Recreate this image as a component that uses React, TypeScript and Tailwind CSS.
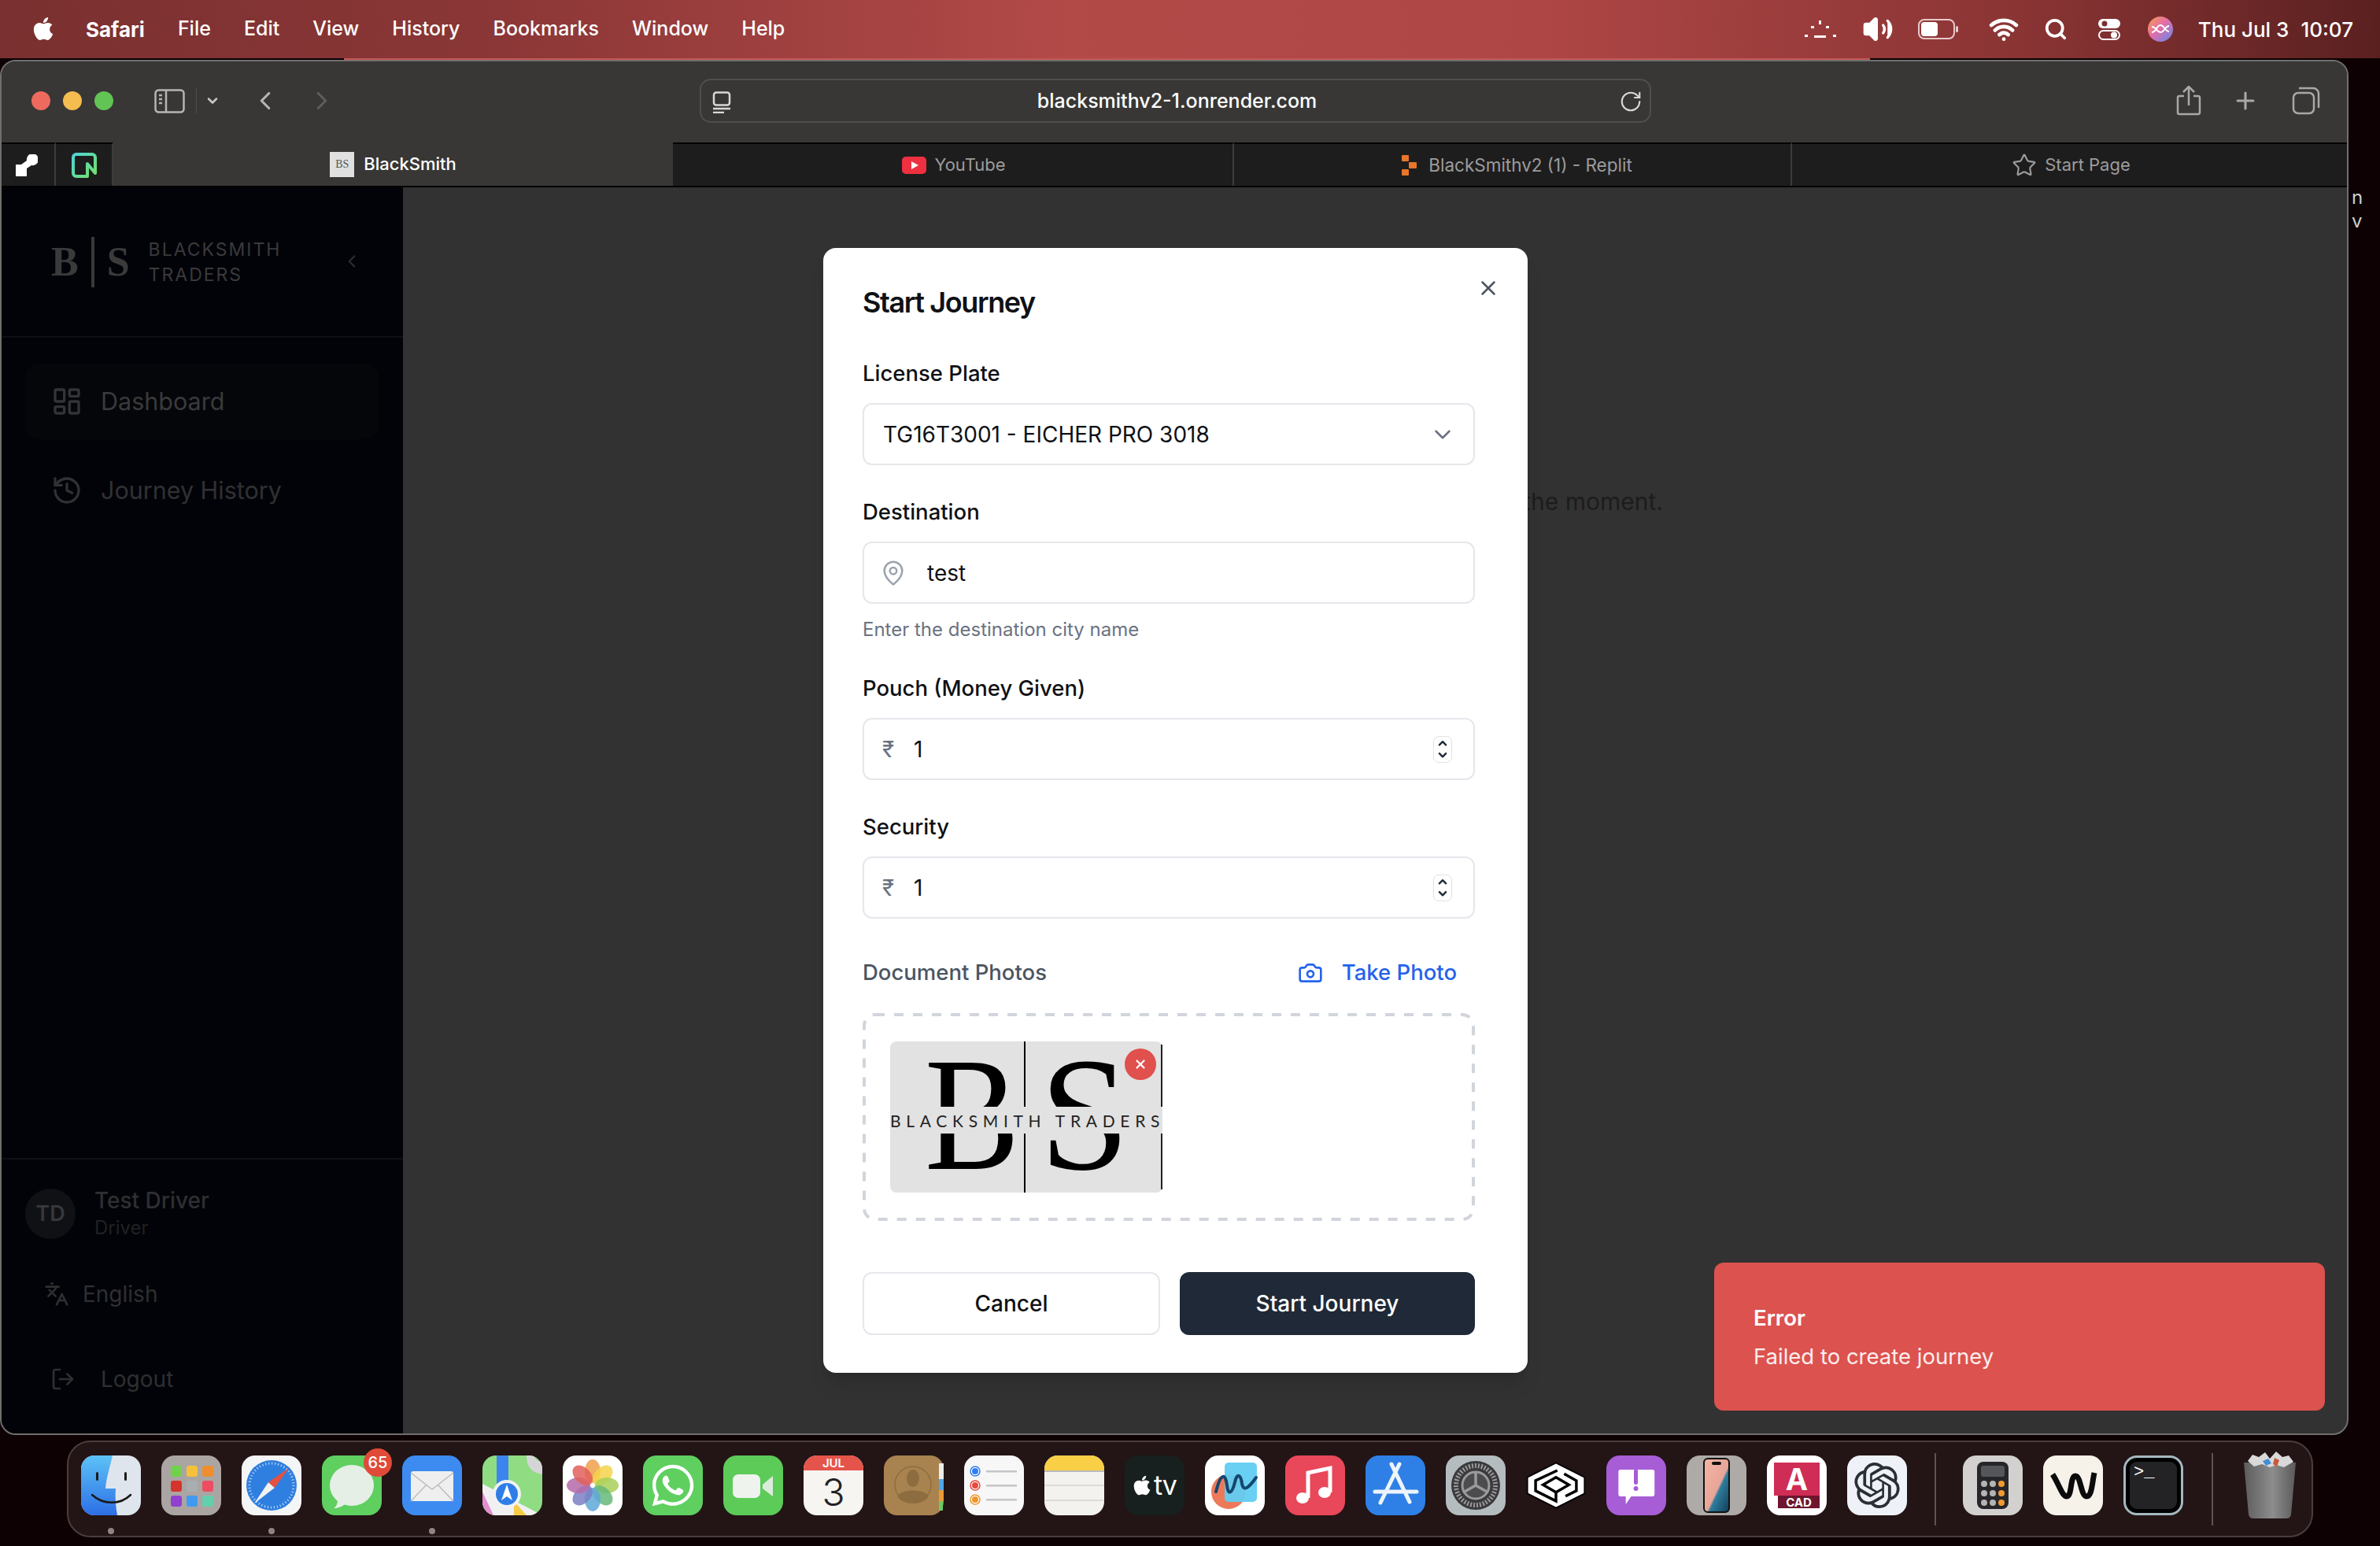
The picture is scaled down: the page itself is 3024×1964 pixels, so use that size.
import type { ReactNode } from 'react'
import {
  Camera,
  ChevronDown,
  ChevronLeft,
  ChevronRight,
  ChevronUp,
  History,
  Languages,
  LayoutDashboard,
  LogOut,
  MapPin,
  Plus,
  RotateCw,
  Search,
  Star,
  Volume2,
  Wifi,
  X,
} from 'lucide-react'
import { FaApple, FaWhatsapp } from 'react-icons/fa'
import { SiOpenai } from 'react-icons/si'

const menuItems = ['File', 'Edit', 'View', 'History', 'Bookmarks', 'Window', 'Help']

function MenuBar() {
  return (
    <div className="flex h-[74px] shrink-0 items-center justify-between bg-[linear-gradient(90deg,#7a3030_0%,#8a3636_20%,#b24a48_45%,#ad4645_65%,#8a3434_85%,#5a2020_100%)] pl-[41px] pr-[34px] text-[25px] text-white">
      <div className="flex items-center">
        <FaApple className="mr-[40px] h-[33px] w-[28px] -translate-y-[1px]" />
        <span className="mr-[42px] text-[26px] font-bold">Safari</span>
        <div className="flex gap-[42px] font-medium">
          {menuItems.map((item) => (
            <span key={item}>{item}</span>
          ))}
        </div>
      </div>
      <div className="flex items-center">
        <svg className="mr-[32px] h-[26px] w-[40px]" viewBox="0 0 40 26" fill="white">
          <rect x="18" y="2" width="3" height="5" />
          <rect x="8" y="9" width="4" height="3" />
          <rect x="27" y="9" width="4" height="3" />
          <rect x="0" y="20" width="4" height="3" />
          <rect x="12" y="21" width="15" height="3" />
          <rect x="36" y="20" width="4" height="3" />
        </svg>
        <Volume2 className="mr-[30px] h-[40px] w-[42px]" fill="white" strokeWidth={2} />
        <svg className="mr-[38px] h-[26px] w-[52px]" viewBox="0 0 52 26">
          <rect x="1" y="1" width="45" height="24" rx="7" fill="none" stroke="#e9c9c9" strokeWidth="2" />
          <rect x="4" y="4" width="21" height="18" rx="4" fill="white" />
          <rect x="48" y="9" width="3" height="8" rx="1.5" fill="#e9c9c9" />
        </svg>
        <Wifi className="mr-[32px] h-[38px] w-[38px]" strokeWidth={3} />
        <Search className="mr-[38px] h-[30px] w-[30px]" strokeWidth={3} />
        <svg className="mr-[34px] h-[30px] w-[30px]" viewBox="0 0 30 30">
          <rect x="1" y="2" width="28" height="12" rx="6" fill="white" />
          <circle cx="9" cy="8" r="3.5" fill="#7a3030" />
          <rect x="2" y="17" width="26" height="11" rx="5.5" fill="none" stroke="white" strokeWidth="2" />
          <circle cx="21" cy="22.5" r="4" fill="white" />
        </svg>
        <svg className="mr-[32px] h-[32px] w-[32px]" viewBox="0 0 32 32">
          <defs>
            <linearGradient id="siri" x1="0" y1="0" x2="1" y2="1">
              <stop offset="0" stopColor="#f4a24a" />
              <stop offset="0.45" stopColor="#e86ca8" />
              <stop offset="1" stopColor="#5a8cf0" />
            </linearGradient>
          </defs>
          <circle cx="16" cy="16" r="16" fill="url(#siri)" />
          <path d="M5 13c6 0 6 7 11 7s6-8 11-8M5 20c6 0 6-9 11-9s6 8 11 8" fill="none" stroke="white" strokeWidth="2" />
        </svg>
        <span className="text-[26px] font-medium">Thu Jul 3</span>
        <span className="ml-[15px] text-[26px] font-medium">10:07</span>
      </div>
    </div>
  )
}

function Toolbar() {
  return (
    <div className="relative flex h-[103px] shrink-0 items-center bg-[#383735] pb-[3px] pl-[38px] pr-[34px]">
      <div className="flex gap-[16px]">
        <span className="h-[24px] w-[24px] rounded-full bg-[#ef6a5e]" />
        <span className="h-[24px] w-[24px] rounded-full bg-[#f5bd4f]" />
        <span className="h-[24px] w-[24px] rounded-full bg-[#61c454]" />
      </div>
      <svg className="ml-[52px] h-[31px] w-[39px]" viewBox="0 0 39 31" fill="none" stroke="#b5b5b3" strokeWidth="2.5">
        <rect x="1.5" y="1.5" width="36" height="28" rx="4" />
        <path d="M15 2v27M6 8h4M6 13h4M6 18h4" />
      </svg>
      <span className="ml-[14px] h-[32px] w-px bg-[#4d4c4a]" />
      <ChevronDown className="ml-[10px] h-[20px] w-[20px] text-[#c8c8c6]" strokeWidth={3} />
      <ChevronLeft className="ml-[38px] h-[38px] w-[38px] text-[#b5b5b3]" strokeWidth={2} />
      <ChevronRight className="ml-[34px] h-[38px] w-[38px] text-[#5f5e5c]" strokeWidth={2} />
      <div className="absolute left-[887px] top-[22px] flex h-[56px] w-[1209px] items-center justify-center rounded-[14px] border-2 border-[#4f4e4c] text-[25px] font-medium text-white">
        <svg className="absolute left-[14px] top-[14px] h-[28px] w-[24px]" viewBox="0 0 24 28" fill="none" stroke="#d8d8d6" strokeWidth="2.5">
          <rect x="2" y="1.5" width="20" height="16" rx="3" />
          <path d="M1 22h22M1 27h14" />
        </svg>
        <span className="translate-x-[2px] translate-y-[1px]">blacksmithv2-1.onrender.com</span>
        <RotateCw className="absolute right-[9px] top-[12px] h-[30px] w-[30px] text-[#d8d8d6]" strokeWidth={1.7} />
      </div>
      <div className="ml-auto flex items-center gap-[39px] text-[#a8a8a6]">
        <svg className="h-[38px] w-[32px]" viewBox="0 0 32 38" fill="none" stroke="currentColor" strokeWidth="2.5">
          <path d="M10 13H4a2 2 0 0 0-2 2v19a2 2 0 0 0 2 2h24a2 2 0 0 0 2-2V15a2 2 0 0 0-2-2h-6M16 25V2M9 8l7-7 7 7" />
        </svg>
        <Plus className="mr-[3px] h-[34px] w-[34px]" strokeWidth={2.2} />
        <svg className="h-[36px] w-[36px]" viewBox="0 0 36 36" fill="none" stroke="currentColor" strokeWidth="2.5">
          <rect x="2" y="8" width="26" height="26" rx="6" />
          <path d="M9 2h18a7 7 0 0 1 7 7v18" />
        </svg>
      </div>
    </div>
  )
}

function TabBar() {
  return (
    <div className="flex h-[57px] shrink-0 border-b-2 border-black bg-[#1e1d1e] text-[22px]">
      <div className="flex w-[69px] items-center justify-center border-t-2 border-r-2 border-t-black border-r-[#3d3c3b] pr-[3px]">
        <svg className="h-[28px] w-[28px]" viewBox="0 0 28 28" fill="white">
          <path d="M0 13h7l7-5a7.5 7.5 0 1 1 6 6l-6 4v10H0z" />
        </svg>
      </div>
      <div className="flex w-[73px] items-center justify-center border-t-2 border-r-2 border-t-black border-r-[#3d3c3b]">
        <svg className="h-[32px] w-[32px]" viewBox="0 0 32 32" fill="none" strokeWidth="4" strokeLinejoin="round">
          <defs>
            <linearGradient id="pinnedN" x1="0" y1="0" x2="1" y2="1">
              <stop offset="0" stopColor="#4fd4d8" />
              <stop offset="1" stopColor="#72e268" />
            </linearGradient>
          </defs>
          <path d="M20 30H6a4 4 0 0 1-4-4V6a4 4 0 0 1 4-4h20a4 4 0 0 1 4 4v20l-10-12z" stroke="url(#pinnedN)" />
        </svg>
      </div>
      <div className="flex w-[711px] items-center justify-center gap-[12px] bg-[#383735] font-medium text-white">
        <span className="flex h-[32px] w-[31px] items-center justify-center bg-[#e0e0e0] font-['Liberation_Serif',serif] text-[14px] text-[#555]">BS</span>
        <span>BlackSmith</span>
      </div>
      <div className="flex w-[713px] items-center justify-center gap-[10px] border-t-2 border-r-2 border-t-black border-r-[#3d3c3b] pl-[3px] text-[#9c9c9c]">
        <svg className="h-[22px] w-[31px]" viewBox="0 0 31 22">
          <rect width="31" height="22" rx="5" fill="#ee3040" />
          <path d="M12 6l9 5-9 5z" fill="white" />
        </svg>
        <span>YouTube</span>
      </div>
      <div className="flex w-[709px] items-center justify-center gap-[14px] border-t-2 border-r-2 border-t-black border-r-[#3d3c3b] pl-[12px] text-[22.5px] text-[#9c9c9c]">
        <svg className="h-[26px] w-[20px]" viewBox="0 0 20 26" fill="#e8762b">
          <rect x="0" y="0" width="9" height="8" rx="1" />
          <rect x="9" y="9" width="10" height="8" rx="1" />
          <rect x="0" y="18" width="9" height="8" rx="1" />
        </svg>
        <span>BlackSmithv2 (1) - Replit</span>
      </div>
      <div className="flex flex-1 items-center justify-center gap-[10px] border-t-2 border-t-black pl-[4px] text-[#9c9c9c]">
        <Star className="h-[32px] w-[32px]" strokeWidth={1.6} />
        <span>Start Page</span>
      </div>
    </div>
  )
}

function Sidebar() {
  return (
    <aside className="flex w-[510px] shrink-0 flex-col bg-[#020308] text-[#3a3a3b]">
      <div className="relative flex h-[191px] shrink-0 items-center border-b-2 border-[#0e1015] pl-[63px]">
        <span className="font-['Liberation_Serif',serif] text-[52px] font-bold leading-none">B</span>
        <span className="ml-[16px] mr-[16px] h-[64px] w-[4px] bg-[#3a3a3b]" />
        <span className="font-['Liberation_Serif',serif] text-[52px] font-bold leading-none">S</span>
        <span className="ml-[24px] text-[23px] leading-[32px] tracking-[2px]">
          BLACKSMITH
          <br />
          TRADERS
        </span>
        <ChevronLeft className="absolute left-[432px] top-[81px] h-[26px] w-[26px] text-[#2d2e30]" strokeWidth={2} />
      </div>
      <nav className="flex flex-col gap-[17px] pl-[30px] pr-[31px] pt-[33px] text-[30.5px]">
        <div className="flex h-[96px] items-center gap-[23px] rounded-[16px] bg-[#05060a] pl-[33px]">
          <LayoutDashboard className="h-[40px] w-[40px] text-[#333436]" strokeWidth={2} />
          <span>Dashboard</span>
        </div>
        <div className="flex h-[96px] items-center gap-[23px] pl-[33px] text-[#303133]">
          <History className="h-[40px] w-[40px]" strokeWidth={2} />
          <span>Journey History</span>
        </div>
      </nav>
      <div className="mt-auto h-[350px] border-t-2 border-[#0e1015] text-[28px] text-[#2e2f31]">
        <div className="flex items-center gap-[24px] pl-[30px] pt-[34px]">
          <span className="flex h-[64px] w-[64px] items-center justify-center rounded-full bg-[#101114] text-[27px] font-semibold text-[#37383a]">TD</span>
          <div className="flex flex-col">
            <span className="font-medium leading-[36px]">Test Driver</span>
            <span className="text-[24px] leading-[34px] text-[#202124]">Driver</span>
          </div>
        </div>
        <div className="mt-[46px] flex items-center gap-[17px] pl-[54px]">
          <Languages className="h-[32px] w-[32px]" strokeWidth={2} />
          <span>English</span>
        </div>
        <div className="mt-[66px] flex items-center gap-[32px] pl-[62px]">
          <LogOut className="h-[32px] w-[32px]" strokeWidth={2} />
          <span>Logout</span>
        </div>
      </div>
    </aside>
  )
}

function Field({ label, gap = 'mt-[39px]', children }: { label: string; gap?: string; children: ReactNode }) {
  return (
    <div className={gap}>
      <div className="mb-[18px] text-[27.5px] font-medium leading-[40px] text-[#0f1115]">{label}</div>
      {children}
    </div>
  )
}

function AmountInput({ value }: { value: string }) {
  return (
    <div className="flex h-[79px] items-center rounded-[12px] border-2 border-[#e5e7eb] pl-[23px] pr-[27px] text-[28px] text-[#0f1115]">
      <span className="w-[40px] text-[28px] text-[#6b7280]">₹</span>
      <span>{value}</span>
      <span className="ml-auto flex h-[34px] w-[24px] flex-col items-center justify-center rounded-[7px] border border-[#dfe1e5] text-[#1f2937]">
        <ChevronUp className="-mb-[1px] h-[18px] w-[18px]" strokeWidth={3.5} />
        <ChevronDown className="h-[18px] w-[18px]" strokeWidth={3.5} />
      </span>
    </div>
  )
}

function LogoThumb() {
  return (
    <div className="relative h-[192px] w-[346px] rounded-[8px] bg-[#e2e2e2]">
      <span className="absolute left-[44px] top-0 origin-left scale-x-[0.88] font-['Liberation_Serif',serif] text-[205px] leading-[186px] text-black">B</span>
      <span className="absolute left-[190px] top-0 font-['Liberation_Serif',serif] text-[205px] leading-[186px] text-black">S</span>
      <span className="absolute left-[170px] top-0 h-full w-[2px] bg-black" />
      <span className="absolute bottom-[4px] right-0 top-[4px] w-[2px] bg-[#222]" />
      <div className="absolute left-0 top-[83px] flex h-[34px] w-full items-center whitespace-nowrap bg-[#e2e2e2] font-['Lato',sans-serif] text-[21px] leading-none tracking-[6.7px] text-[#222]">
        BLACKSMITH&nbsp;TRADERS
      </div>
      <span className="absolute left-[298px] top-[9px] flex h-[40px] w-[40px] items-center justify-center rounded-full bg-[#e0504c] text-white">
        <X className="h-[18px] w-[18px]" strokeWidth={3} />
      </span>
    </div>
  )
}

function StartJourneyModal() {
  return (
    <div className="relative h-[1429px] w-[895px] rounded-[16px] bg-white pl-[50px] pr-[67px] pt-[47px] shadow-xl">
      <h2 className="text-[36px] font-semibold leading-[44px] tracking-[-1.4px] text-[#0f1115]">Start Journey</h2>
      <X className="absolute right-[35px] top-[36px] h-[30px] w-[30px] text-[#4b5563]" strokeWidth={2} />

      <Field label="License Plate" gap="mt-[48px]">
        <div className="flex h-[79px] items-center justify-between rounded-[12px] border-2 border-[#e5e7eb] pl-[24px] pr-[22px] text-[28px] text-[#0f1115]">
          <span>TG16T3001 - EICHER PRO 3018</span>
          <ChevronDown className="h-[34px] w-[34px] text-[#6b7280]" strokeWidth={1.8} />
        </div>
      </Field>

      <Field label="Destination">
        <div className="flex h-[79px] items-center rounded-[12px] border-2 border-[#e5e7eb] pl-[20px] text-[28px] text-[#0f1115]">
          <MapPin className="mr-[26px] h-[34px] w-[34px] text-[#9ca3af]" strokeWidth={1.8} />
          <span>test</span>
        </div>
      </Field>
      <p className="mt-[17px] text-[24px] leading-[32px] text-[#6b7280]">Enter the destination city name</p>

      <Field label="Pouch (Money Given)" gap="mt-[38px]">
        <AmountInput value="1" />
      </Field>
      <Field label="Security">
        <AmountInput value="1" />
      </Field>

      <div className="mt-[49px] flex h-[40px] items-center text-[27.5px] font-medium">
        <span className="text-[#4b5563]">Document Photos</span>
        <Camera className="ml-auto mr-[24px] h-[32px] w-[32px] text-[#2563eb]" strokeWidth={2} />
        <span className="mr-[23px] text-[#2563eb]">Take Photo</span>
      </div>
      <div className="relative mt-[31px] h-[264px] pl-[35px] pt-[36px]">
        <svg className="absolute inset-0 h-full w-full" viewBox="0 0 778 264" fill="none">
          <rect x="2" y="2" width="774" height="260" rx="14" stroke="#d1d5db" strokeWidth="4" strokeDasharray="12 12" />
        </svg>
        <LogoThumb />
      </div>

      <div className="mt-[65px] flex gap-[25px] text-[28px] font-medium">
        <div className="flex h-[80px] w-[378px] items-center justify-center rounded-[12px] border-2 border-[#e5e7eb] text-[#0f1115]">Cancel</div>
        <div className="flex h-[80px] flex-1 items-center justify-center rounded-[12px] bg-[#1f2937] text-white">Start Journey</div>
      </div>
    </div>
  )
}

function BrowserWindow() {
  return (
    <div className="flex h-[1747px] w-[2984px] shrink-0 flex-col overflow-hidden rounded-[20px] border-2 border-[#6f6f6e] bg-[#323232]">
      <Toolbar />
      <TabBar />
      <div className="relative flex min-h-0 flex-1">
        <Sidebar />
        <main className="flex flex-1 justify-end pr-[869px] pt-[377px]">
          <span className="text-[30px] leading-[44px] text-[#1c1c1c]">at the moment.</span>
        </main>
        <div className="absolute inset-0 flex justify-center pl-[3px] pt-[77px]">
          <StartJourneyModal />
        </div>
        <div className="absolute bottom-[29px] right-[28px] flex h-[188px] w-[776px] flex-col justify-center gap-[13px] rounded-[12px] bg-[#dc524e] pl-[50px] text-[27.5px] text-white">
          <span className="font-semibold leading-[36px]">Error</span>
          <span className="leading-[36px] text-white/90">Failed to create journey</span>
        </div>
      </div>
    </div>
  )
}

function Squircle({ bg, children, size = 76 }: { bg: string; children?: ReactNode; size?: number }) {
  return (
    <svg width={size} height={size} viewBox="0 0 76 76">
      <rect width="76" height="76" rx="17" fill={bg} />
      {children}
    </svg>
  )
}

function Finder() {
  return (
    <Squircle bg="#dfe5ec">
      <defs>
        <linearGradient id="finder" x1="0" y1="0" x2="0" y2="1">
          <stop offset="0" stopColor="#5cc2f7" />
          <stop offset="1" stopColor="#2d6fe6" />
        </linearGradient>
      </defs>
      <path d="M17 0h23c-3 14-8 28-9 42h13c-1 11 0 23 2 34H17A17 17 0 0 1 0 59V17A17 17 0 0 1 17 0z" fill="url(#finder)" />
      <rect x="19" y="21" width="3" height="11" rx="1.5" fill="#1a1a1a" />
      <rect x="55" y="21" width="3" height="11" rx="1.5" fill="#1a1a1a" />
      <path d="M14 50c14 13 36 13 49 0" fill="none" stroke="#1a1a1a" strokeWidth="2.5" strokeLinecap="round" />
    </Squircle>
  )
}

function Launchpad() {
  const colors = ['#6fd24a', '#f6c13a', '#ee8e2f', '#d5342a', '#a9aeb0', '#ec4d62', '#9140cf', '#3f9af0', '#62d0ac']
  return (
    <Squircle bg="#aaa5a3">
      {colors.map((color, i) => (
        <rect key={color} x={12 + (i % 3) * 20} y={13 + Math.floor(i / 3) * 19} width="14" height="14" rx="3" fill={color} />
      ))}
    </Squircle>
  )
}

function SafariIcon() {
  return (
    <Squircle bg="#f4f5f6">
      <circle cx="38" cy="38" r="32" fill="#2f7fe0" />
      <circle cx="38" cy="38" r="28" fill="none" stroke="#cfe2f8" strokeWidth="3" strokeDasharray="1 3" />
      <path d="M16 61l18-27 8 7z" fill="#f2f2f2" />
      <path d="M60 16L34 34l8 7z" fill="#e8503f" />
    </Squircle>
  )
}

function Messages() {
  return (
    <Squircle bg="#5fcf60">
      <ellipse cx="38" cy="38" rx="28" ry="26" fill="#e6efe6" />
      <path d="M20 56c0 6-2 9-5 11 5 0 11-2 15-6z" fill="#e6efe6" />
    </Squircle>
  )
}

function Mail() {
  return (
    <Squircle bg="#3d8bf0">
      <rect x="11" y="20" width="54" height="38" rx="3" fill="#efefef" />
      <path d="M11 22l27 21 27-21M11 58l20-21M65 58L45 37" fill="none" stroke="#bdbdbd" strokeWidth="1.5" />
    </Squircle>
  )
}

function Maps() {
  return (
    <svg width={76} height={76} viewBox="0 0 76 76">
      <defs>
        <clipPath id="mapsClip">
          <rect width="76" height="76" rx="17" />
        </clipPath>
      </defs>
      <g clipPath="url(#mapsClip)">
        <rect width="76" height="76" fill="#8fdc82" />
        <path d="M0 36l76 40H0z" fill="#f0f0f2" />
        <path d="M0 46v30h14z" fill="#e28fd0" />
        <path d="M40 76V58l16 18z" fill="#f6cc45" />
        <rect x="18" y="0" width="15" height="50" fill="#3d85ee" />
        <path d="M56 0c0 16 8 22 20 24V8C70 8 66 4 66 0z" fill="#d5d5d8" />
        <circle cx="31" cy="49" r="18" fill="#f2f2f4" />
        <circle cx="31" cy="49" r="14" fill="#2f7ee8" />
        <path d="M31 37l7 20-7-5-7 5z" fill="white" />
      </g>
    </svg>
  )
}

function Photos() {
  const petals = ['#f0a04b', '#f4d34a', '#a8cf58', '#66b879', '#5fa8d8', '#7a7fc4', '#b56aa8', '#e2605a']
  return (
    <Squircle bg="white">
      {petals.map((color, i) => (
        <ellipse key={color} cx="38" cy="20" rx="10" ry="15" fill={color} opacity="0.85" transform={`rotate(${i * 45} 38 38)`} />
      ))}
    </Squircle>
  )
}

function Whatsapp() {
  return (
    <div className="flex h-[76px] w-[76px] items-center justify-center rounded-[17px] bg-[#5fcf60] text-white">
      <FaWhatsapp className="h-[60px] w-[60px]" />
    </div>
  )
}

function Facetime() {
  return (
    <Squircle bg="#5ccb58">
      <rect x="12" y="24" width="35" height="30" rx="7" fill="#eef3ee" />
      <path d="M50 37l13-11v26L50 42z" fill="#dcebdc" />
    </Squircle>
  )
}

function CalendarIcon() {
  return (
    <div className="flex h-[76px] w-[76px] flex-col items-center overflow-hidden rounded-[17px] bg-[#f6f5f2]">
      <span className="flex h-[19px] w-full items-center justify-center bg-[#e5544b] text-[15px] font-semibold leading-none text-white">JUL</span>
      <span className="text-[48px] font-light leading-[56px] text-[#222]">3</span>
    </div>
  )
}

function Contacts() {
  return (
    <Squircle bg="#a88350">
      <rect x="70" y="10" width="6" height="20" fill="#ececec" />
      <rect x="70" y="30" width="6" height="14" fill="#4fa6e8" />
      <rect x="70" y="44" width="6" height="14" fill="#ea9a35" />
      <rect x="70" y="58" width="5" height="12" fill="#6ccb63" />
      <circle cx="37" cy="37" r="23" fill="none" stroke="#8d6d40" strokeWidth="1.5" />
      <ellipse cx="37" cy="29" rx="8" ry="11" fill="#8d6d40" />
      <path d="M17 52c4-10 36-10 40 0-8 12-32 12-40 0z" fill="#8d6d40" />
    </Squircle>
  )
}

function Reminders() {
  return (
    <Squircle bg="#f7f7f7">
      {[
        ['#2f7df0', 20],
        ['#e84a3f', 38],
        ['#ee9428', 56],
      ].map(([color, y]) => (
        <g key={color}>
          <circle cx="14" cy={y} r="6" fill="white" stroke={color as string} strokeWidth="1.5" />
          <circle cx="14" cy={y} r="4" fill={color as string} />
          <rect x="28" y={(y as number) - 1} width="39" height="2.5" fill="#c5c5c8" />
        </g>
      ))}
    </Squircle>
  )
}

function Notes() {
  return (
    <svg width={76} height={76} viewBox="0 0 76 76">
      <defs>
        <clipPath id="notesClip">
          <rect width="76" height="76" rx="17" />
        </clipPath>
      </defs>
      <g clipPath="url(#notesClip)">
        <rect width="76" height="76" fill="#f3f2ee" />
        <rect width="76" height="19" fill="#f8cf45" />
        <rect y="19" width="76" height="2" fill="#bbb" />
        <rect y="37" width="76" height="2" fill="#dddcda" />
        <rect y="56" width="76" height="2" fill="#dddcda" />
      </g>
    </svg>
  )
}

function AppleTv() {
  return (
    <div className="flex h-[76px] w-[76px] items-center justify-center gap-[3px] rounded-[17px] bg-[#17201e] text-white">
      <FaApple className="h-[28px] w-[24px]" />
      <span className="text-[34px] font-normal leading-none tracking-[-1px]">tv</span>
    </div>
  )
}

function Freeform() {
  return (
    <Squircle bg="white">
      <circle cx="30" cy="46" r="22" fill="#ec7a5a" />
      <rect x="25" y="9" width="41" height="50" rx="5" fill="#62cdf2" opacity="0.95" />
      <path d="M14 46c6-24 12-24 14-8 1 12 6 12 10-4 3-14 8-8 9 2 2 10 8 6 18-8" fill="none" stroke="#15466e" strokeWidth="4" strokeLinecap="round" />
    </Squircle>
  )
}

function Music() {
  return (
    <Squircle bg="#e9475a">
      <path d="M29 54V22l28-6v31" fill="none" stroke="white" strokeWidth="5" />
      <ellipse cx="22" cy="54" rx="8" ry="7" fill="white" />
      <ellipse cx="50" cy="47" rx="8" ry="7" fill="white" />
    </Squircle>
  )
}

function AppStore() {
  return (
    <Squircle bg="#2f80e6">
      <path d="M33 11l23 48M43 11L19 60M12 46h53" fill="none" stroke="#eef4fb" strokeWidth="5" strokeLinecap="round" />
    </Squircle>
  )
}

function Settings() {
  return (
    <Squircle bg="#b5bcc0">
      <circle cx="38" cy="38" r="31" fill="#3a3a3c" />
      <circle cx="38" cy="38" r="25" fill="none" stroke="#9a9a9c" strokeWidth="6" strokeDasharray="2 2" />
      <circle cx="38" cy="38" r="17" fill="#4c4c4e" stroke="#9a9a9c" strokeWidth="3" />
      <path d="M38 38V20M38 38l16 9M38 38l-16 9" stroke="#9a9a9c" strokeWidth="3.5" />
    </Squircle>
  )
}

function HexLogo() {
  return (
    <svg width={88} height={68} viewBox="0 0 88 68">
      <path d="M44 1l42 21v24L44 67 2 46V22z" fill="white" stroke="black" strokeWidth="2" />
      <path d="M46 12L14 27v15l30 15V44M56 17l18 10v15l-16 8" fill="none" stroke="black" strokeWidth="4" />
      <path d="M44 22L25 33l19 11 19-11z" fill="white" stroke="black" strokeWidth="4" />
    </svg>
  )
}

function Feedback() {
  return (
    <Squircle bg="#a75dd6">
      <path d="M14 14h48a3 3 0 0 1 3 3v34a3 3 0 0 1-3 3H30l-8 12v-12h-8a3 3 0 0 1-3-3V17a3 3 0 0 1 3-3z" fill="white" transform="translate(6 6) scale(.85)" />
      <rect x="35" y="17" width="5" height="20" rx="2.5" fill="#a75dd6" />
      <circle cx="37.5" cy="42" r="3" fill="#a75dd6" />
    </Squircle>
  )
}

function Mirroring() {
  return (
    <Squircle bg="#aeaaa8">
      <defs>
        <linearGradient id="phone" x1="0" y1="0" x2="1" y2="1">
          <stop offset="0" stopColor="#f4b5a0" />
          <stop offset="0.55" stopColor="#e8a59a" />
          <stop offset="0.6" stopColor="#2f7d9c" />
          <stop offset="1" stopColor="#103c58" />
        </linearGradient>
      </defs>
      <rect x="22" y="4" width="32" height="68" rx="5" fill="url(#phone)" stroke="#111" strokeWidth="2" />
      <rect x="32" y="8" width="12" height="4" rx="2" fill="#111" />
    </Squircle>
  )
}

function AutoCad() {
  return (
    <div className="flex h-[76px] w-[76px] flex-col items-end overflow-hidden rounded-[17px] bg-white pr-[9px] pt-[9px]">
      <div className="flex h-[42px] w-[58px] items-center justify-center bg-[#cf2d55] text-[38px] font-bold leading-none text-white">A</div>
      <div className="flex h-[16px] w-[53px] items-center justify-center bg-[#6e1530] text-[15px] font-bold leading-none text-white">CAD</div>
    </div>
  )
}

function ChatGpt() {
  return (
    <div className="flex h-[76px] w-[76px] items-center justify-center rounded-[17px] bg-[#eef2f8] text-[#2a2f36]">
      <SiOpenai className="h-[58px] w-[58px]" />
    </div>
  )
}

function Calculator() {
  return (
    <Squircle bg="#d2d1cf">
      <rect x="18" y="8" width="40" height="60" rx="8" fill="#26262a" />
      <rect x="23" y="13" width="30" height="14" rx="3" fill="#55565a" />
      {[0, 1, 2].flatMap((row) =>
        [0, 1, 2].map((col) => (
          <circle key={`${row}-${col}`} cx={27 + col * 11} cy={36 + row * 12} r="4" fill={col === 2 ? '#f09a30' : '#b4b4b4'} />
        )),
      )}
    </Squircle>
  )
}

function Wispr() {
  return (
    <Squircle bg="#f6f2ea">
      <path d="M12 24C20 36 24 52 30 52 37 52 34 26 41 26 48 26 48 52 55 52 62 52 62 36 65 22" fill="none" stroke="#0b0b0b" strokeWidth="7" />
    </Squircle>
  )
}

function Terminal() {
  return (
    <div className="flex h-[76px] w-[76px] flex-col rounded-[17px] border-[3px] border-[#a5b8c0] bg-black p-[5px]">
      <div className="h-full w-full rounded-[9px] bg-[#232325] pl-[5px] pt-[3px] font-['Liberation_Mono',monospace] text-[22px] leading-none text-white">
        &gt;_
      </div>
    </div>
  )
}

function Trash() {
  return (
    <svg width={68} height={86} viewBox="0 0 68 86">
      <defs>
        <linearGradient id="trash" x1="0" y1="0" x2="1" y2="0">
          <stop offset="0" stopColor="#5c5c5c" />
          <stop offset="0.55" stopColor="#8d8d8d" />
          <stop offset="1" stopColor="#5a5a5a" />
        </linearGradient>
      </defs>
      <path d="M1 14h66l-6 66a6 6 0 0 1-6 5H13a6 6 0 0 1-6-5z" fill="url(#trash)" />
      <path d="M6 12l6-8 8 3 8-6 6 8 8-9 8 7 8-2 6 8-12 7-10-3-8 3-10-4-10 3z" fill="#d9d9d9" />
      <path d="M25 12l7-3 4 6-7 3z" fill="#3f8fd8" />
      <path d="M40 8l6 3-3 8-5-3z" fill="#c75a3a" />
    </svg>
  )
}

function DockSlot({ running, badge, children }: { running?: boolean; badge?: string; children: ReactNode }) {
  return (
    <div className="relative flex h-[76px] w-[76px] items-center justify-center">
      {children}
      {badge && (
        <span className="absolute -right-[13px] -top-[9px] flex h-[36px] w-[36px] items-center justify-center rounded-full bg-[#e04a38] text-[20px] font-medium text-white">
          {badge}
        </span>
      )}
      {running && <span className="absolute -bottom-[24px] left-[34px] h-[8px] w-[8px] rounded-full bg-[#8f8385]" />}
    </div>
  )
}

function Dock() {
  return (
    <div className="ml-[85px] mt-[7px] flex h-[123px] w-[2854px] shrink-0 items-center gap-[26px] rounded-[30px] border-2 border-[#4a3d3e] bg-[#231415] pb-[9px] pl-[16px]">
      <DockSlot running><Finder /></DockSlot>
      <DockSlot><Launchpad /></DockSlot>
      <DockSlot running><SafariIcon /></DockSlot>
      <DockSlot badge="65"><Messages /></DockSlot>
      <DockSlot running><Mail /></DockSlot>
      <DockSlot><Maps /></DockSlot>
      <DockSlot><Photos /></DockSlot>
      <DockSlot><Whatsapp /></DockSlot>
      <DockSlot><Facetime /></DockSlot>
      <DockSlot><CalendarIcon /></DockSlot>
      <DockSlot><Contacts /></DockSlot>
      <DockSlot><Reminders /></DockSlot>
      <DockSlot><Notes /></DockSlot>
      <DockSlot><AppleTv /></DockSlot>
      <DockSlot><Freeform /></DockSlot>
      <DockSlot><Music /></DockSlot>
      <DockSlot><AppStore /></DockSlot>
      <DockSlot><Settings /></DockSlot>
      <DockSlot><HexLogo /></DockSlot>
      <DockSlot><Feedback /></DockSlot>
      <DockSlot><Mirroring /></DockSlot>
      <DockSlot><AutoCad /></DockSlot>
      <DockSlot><ChatGpt /></DockSlot>
      <span className="ml-[9px] mr-[8px] mt-[9px] h-[92px] w-[2px] shrink-0 bg-[#5f5253]" />
      <DockSlot><Calculator /></DockSlot>
      <DockSlot><Wispr /></DockSlot>
      <DockSlot><Terminal /></DockSlot>
      <span className="ml-[10px] mr-[8px] mt-[9px] h-[92px] w-[2px] shrink-0 bg-[#5f5253]" />
      <DockSlot><Trash /></DockSlot>
    </div>
  )
}

export default function App() {
  return (
    <div className="relative flex h-[1964px] w-[3024px] flex-col overflow-hidden bg-[#0d0103] font-['Inter',sans-serif]">
      <MenuBar />
      <div className="ml-[437px] h-[2px] w-[1939px] shrink-0 bg-[#c65755]" />
      <BrowserWindow />
      <Dock />
      <span className="absolute left-[2988px] top-[236px] text-[24px] leading-[30px] text-[#cfcfcf]">
        n
        <br />
        v
      </span>
    </div>
  )
}
